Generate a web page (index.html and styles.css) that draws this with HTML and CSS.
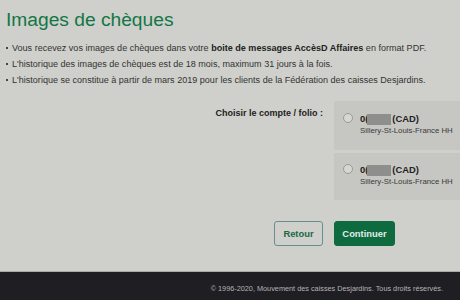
FILE: index.html
```html
<!DOCTYPE html>
<html lang="fr">
<head>
<meta charset="utf-8">
<link rel="stylesheet" href="styles.css">
</head>
<body>
<main class="page">
  <h1 class="title">Images de chèques</h1>
  <ul class="notes">
    <li>Vous recevez vos images de chèques dans votre <b>boite de messages AccèsD Affaires</b> en format PDF.</li>
    <li>L'historique des images de chèques est de 18 mois, maximum 31 jours à la fois.</li>
    <li>L'historique se constitue à partir de mars 2019 pour les clients de la Fédération des caisses Desjardins.</li>
  </ul>
  <div class="choose">
    <div class="label">Choisir le compte / folio :</div>
    <div class="accounts">
      <label class="account">
        <span class="radio"></span>
        <span class="info">
          <span class="num">0(<span class="mask"></span>(CAD)</span>
          <span class="branch">Sillery-St-Louis-France HH</span>
        </span>
      </label>
      <label class="account">
        <span class="radio"></span>
        <span class="info">
          <span class="num">0(<span class="mask"></span>(CAD)</span>
          <span class="branch">Sillery-St-Louis-France HH</span>
        </span>
      </label>
    </div>
  </div>
  <div class="actions">
    <button class="btn btn-back">Retour</button>
    <button class="btn btn-go">Continuer</button>
  </div>
</main>
<footer class="footer">© 1996-2020, Mouvement des caisses Desjardins. Tous droits réservés.</footer>
</body>
</html>
```
FILE: styles.css
```css
html, body {
  margin: 0;
  padding: 0;
}
body {
  width: 460px;
  height: 300px;
  overflow: hidden;
  background: #cfd0cb;
  font-family: "Liberation Sans", Arial, sans-serif;
  color: #2a2a2a;
  display: flex;
  flex-direction: column;
}
.page {
  height: 271px;
  box-sizing: border-box;
  padding: 0 0 0 6px;
}
.title {
  margin: 0;
  padding-top: 8px;
  font-weight: normal;
  font-size: 19.2px;
  line-height: 24px;
  color: #137647;
}
.notes {
  list-style: none;
  margin: 8px 0 0 0;
  padding: 0;
  font-size: 9.05px;
  line-height: 16px;
  color: #333;
}
.notes li {
  position: relative;
  padding-left: 6px;
}
.notes li::before {
  content: "";
  position: absolute;
  left: 0;
  top: 7px;
  width: 2px;
  height: 2px;
  background: #444;
}
.notes b {
  color: #222;
}
.choose {
  display: flex;
  justify-content: flex-end;
  margin-top: 13px;
}
.label {
  font-weight: bold;
  font-size: 9px;
  color: #222;
  padding-top: 7px;
  margin-right: 11px;
}
.accounts {
  width: 126px;
  display: flex;
  flex-direction: column;
  gap: 3px;
}
.account {
  display: flex;
  background: #c6c7c2;
  height: 47px;
  box-sizing: border-box;
  padding: 11px 0 0 9px;
}
.account:first-child {
  height: 49px;
  padding-top: 12px;
}
.radio {
  width: 8px;
  height: 8px;
  border: 1px solid #9a9b98;
  border-radius: 50%;
  background: #d6d7d3;
  flex: none;
}
.info {
  display: flex;
  flex-direction: column;
  margin-left: 7px;
}
.num {
  font-weight: bold;
  font-size: 9.4px;
  line-height: 12px;
  color: #222;
  display: flex;
  align-items: center;
}
.mask {
  display: inline-block;
  width: 24px;
  height: 11px;
  background: #8e8f8d;
  margin-left: -1px;
  margin-right: 1px;
}
.branch {
  font-size: 7.8px;
  line-height: 12px;
  color: #3a3a3a;
}
.actions {
  display: flex;
  justify-content: flex-end;
  gap: 11px;
  margin-top: 21px;
  padding-right: 65px;
}
.btn {
  font-family: "Liberation Sans", Arial, sans-serif;
  font-weight: bold;
  font-size: 9.4px;
  height: 25px;
  border-radius: 3px;
  cursor: pointer;
  box-sizing: border-box;
}
.btn-back {
  width: 49px;
  background: transparent;
  border: 1.5px solid #6a8f92;
  color: #1a6a44;
}
.btn-go {
  width: 61px;
  background: #0d6b3f;
  border: 1px solid #0d6b3f;
  color: #e4ece7;
}
.footer {
  border-top: 1px solid #a9aaa7;
  background: #1f1e23;
  flex: 1;
  color: #b4b4b6;
  font-size: 7.3px;
  text-align: right;
  padding: 12px 17px 0 0;
}
```
